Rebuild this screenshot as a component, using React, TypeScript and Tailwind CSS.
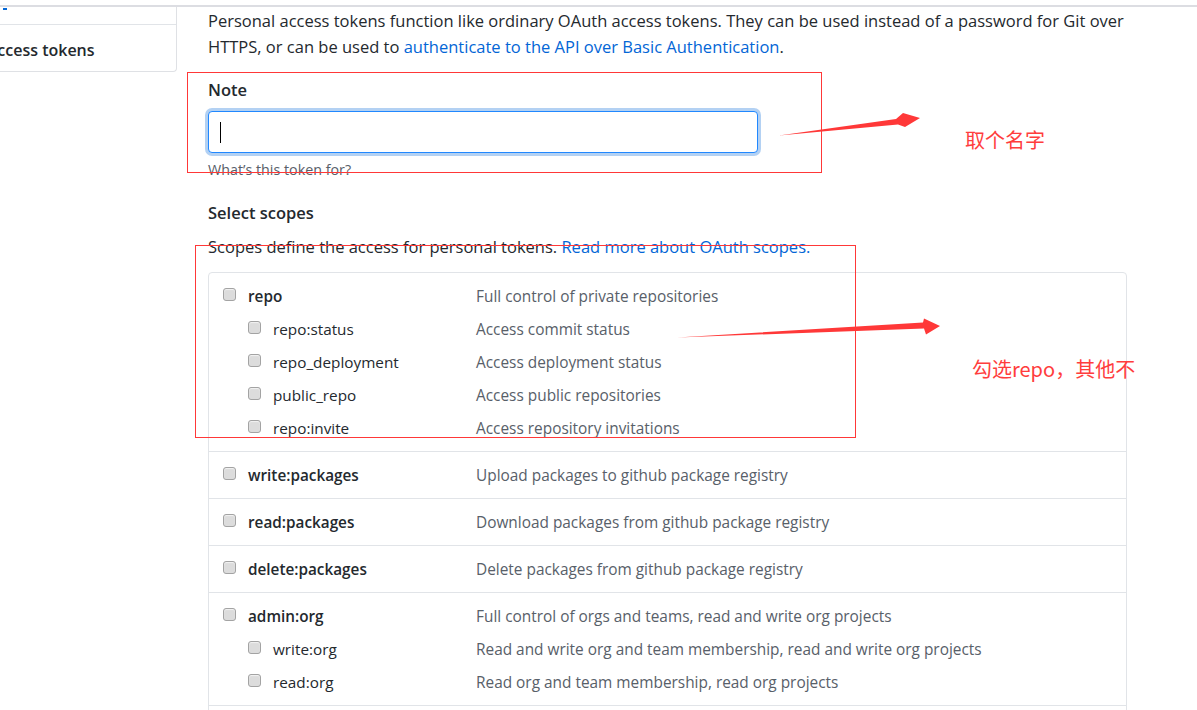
import React from "react";

type Scope = { name: string; desc: string; child?: boolean };

const groups: Scope[][] = [
  [
    { name: "repo", desc: "Full control of private repositories" },
    { name: "repo:status", desc: "Access commit status", child: true },
    { name: "repo_deployment", desc: "Access deployment status", child: true },
    { name: "public_repo", desc: "Access public repositories", child: true },
    { name: "repo:invite", desc: "Access repository invitations", child: true },
  ],
  [{ name: "write:packages", desc: "Upload packages to github package registry" }],
  [{ name: "read:packages", desc: "Download packages from github package registry" }],
  [{ name: "delete:packages", desc: "Delete packages from github package registry" }],
  [
    { name: "admin:org", desc: "Full control of orgs and teams, read and write org projects" },
    { name: "write:org", desc: "Read and write org and team membership, read and write org projects", child: true },
    { name: "read:org", desc: "Read org and team membership, read org projects", child: true },
  ],
];

function Checkbox() {
  return (
    <div className="mt-[8px] h-[13px] w-[13px] shrink-0 rounded-[3px] border border-[#a3a3a3] bg-[#dcdcdc] shadow-[inset_0_1px_1px_#f2f2f2]" />
  );
}

function Row({ s }: { s: Scope }) {
  return (
    <div className="flex h-[33px] items-start">
      <div className={`flex w-[267px] shrink-0 items-start ${s.child ? "pl-[39px]" : "pl-[14px]"}`}>
        <Checkbox />
        <span
          className={`ml-[12px] whitespace-nowrap text-[15.3px] leading-[33px] text-[#24292e] ${s.child ? "font-normal" : "font-semibold"}`}
        >
          {s.name}
        </span>
      </div>
      <span className="whitespace-nowrap text-[15.4px] leading-[33px] text-[#586069]">{s.desc}</span>
    </div>
  );
}

export default function App() {
  return (
    <div className="relative h-[710px] w-[1197px] overflow-hidden bg-white text-[#24292e] font-['Open_Sans','Noto_Sans_CJK_SC',sans-serif]">
      <div className="mt-[5px] h-[2px] w-full bg-[#dcdde2]" />
      <div className="flex">
        <aside className="h-[65px] w-[177px] shrink-0 overflow-hidden rounded-br-[4px] border-r border-b border-[#dfe1e5]">
          <div className="h-[18px] border-b border-[#e1e4e8] pl-[3px] pt-[1px]">
            <div className="h-[2px] w-[4px] bg-[#0366d6]" />
          </div>
          <div className="-ml-[12px] whitespace-nowrap pt-[15px] text-[16px] font-semibold leading-[20px] text-[#24292e]">
            access tokens
          </div>
        </aside>
        <main className="ml-[31px] w-[919px] pt-[1px]">
          <p className="whitespace-nowrap text-[16.5px] leading-[26px] text-[#24292e]">
            Personal access tokens function like ordinary OAuth access tokens. They can be used instead of a password for Git over
            <br />
            HTTPS, or can be used to{" "}
            <span className="text-[#0366d6]">authenticate to the API over Basic Authentication</span>.
          </p>
          <div className="mt-[17px] text-[16.5px] font-semibold leading-[26px]">Note</div>
          <div className="mt-[8px] flex h-[42px] w-[550px] items-center rounded-[4px] border border-[#2188ff] bg-white pl-[11px] shadow-[0_0_0_3px_rgba(3,102,214,0.3)]">
            <div className="h-[21px] w-[1px] bg-black" />
          </div>
          <div className="mt-[7px] text-[14.3px] leading-[20px] text-[#586069]">What’s this token for?</div>
          <div className="mt-[20px] text-[16.5px] font-semibold leading-[26px]">Select scopes</div>
          <p className="mt-[8px] whitespace-nowrap text-[16.5px] leading-[26px] text-[#24292e]">
            Scopes define the access for personal tokens.{" "}
            <span className="text-[#0366d6]">Read more about OAuth scopes.</span>
          </p>
          <div className="mt-[12px] rounded-[4px] border border-[#e1e4e8]">
            {groups.map((g, i) => (
              <div key={i} className={`pt-[7px] pb-[6px] ${i > 0 ? "border-t border-[#e1e4e8]" : ""}`}>
                {g.map((s) => (
                  <Row key={s.name} s={s} />
                ))}
              </div>
            ))}
            <div className="h-[40px] border-t border-[#e1e4e8]" />
          </div>
        </main>
      </div>

      {/* annotations drawn over the page */}
      <div className="pointer-events-none absolute left-[187px] top-[72px] h-[101px] w-[635px] border border-[#ff3838]" />
      <div className="pointer-events-none absolute left-[195px] top-[245px] h-[193px] w-[661px] border border-[#ff3838]" />
      <svg className="pointer-events-none absolute left-0 top-0" width="1197" height="710">
        <polygon points="779,135.5 896,119 903,113 920,118 905,127 898,124.5" fill="#ff3838" />
        <polygon points="677,337.5 923,322.5 924,318.5 940,326 926,334.5 924,328.5" fill="#ff3838" />
      </svg>
      <div className="absolute left-[965px] top-[127px] whitespace-nowrap text-[20px] leading-[26px] text-[#ff3d3d] font-['Noto_Sans_CJK_SC',sans-serif]">
        取个名字
      </div>
      <div className="absolute left-[972px] top-[356px] whitespace-nowrap text-[20px] leading-[26px] text-[#ff3d3d] font-['Noto_Sans_CJK_SC',sans-serif]">
        勾选repo，其他不
      </div>
    </div>
  );
}
